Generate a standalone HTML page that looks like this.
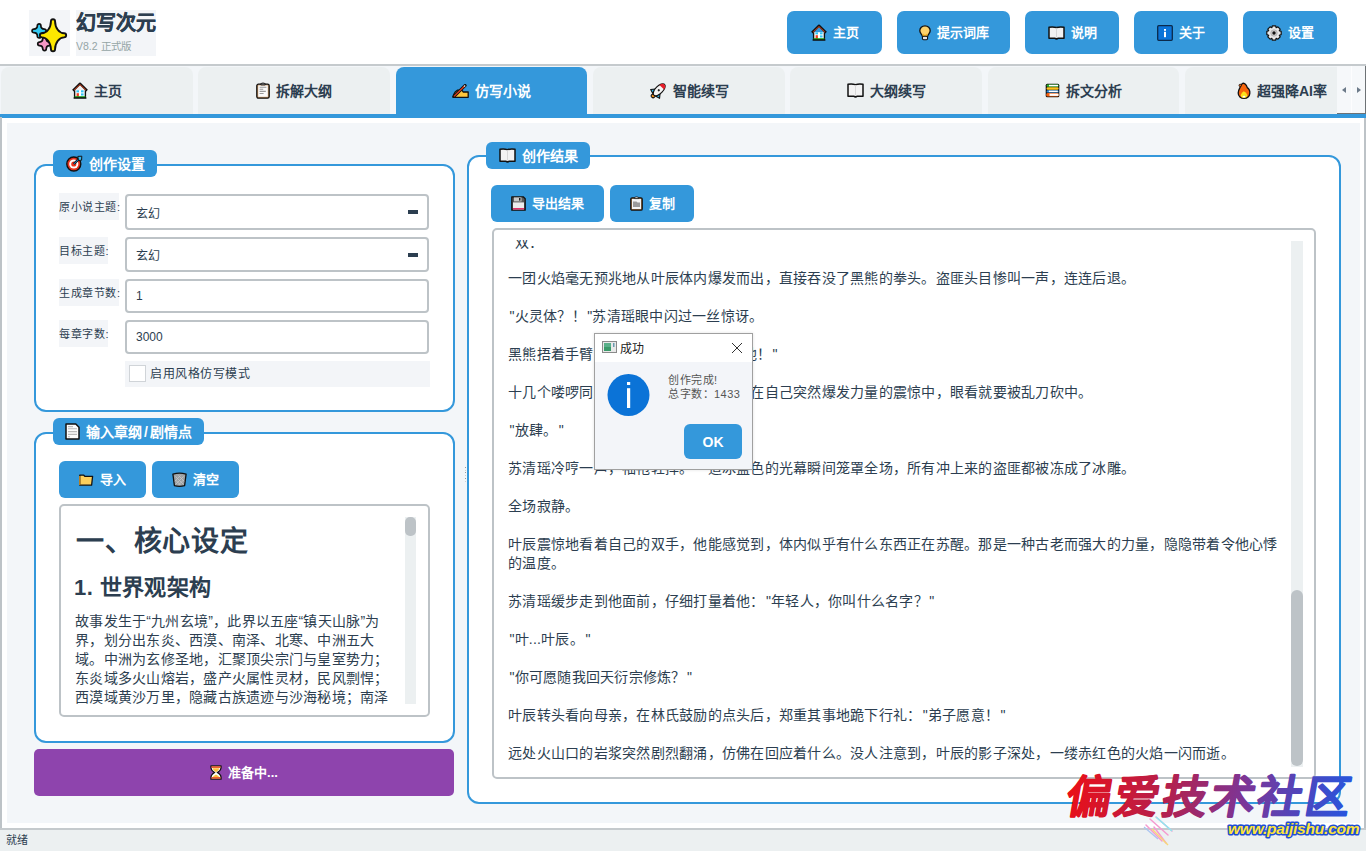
<!DOCTYPE html>
<html lang="zh-CN"><head><meta charset="utf-8">
<style>
*{margin:0;padding:0;box-sizing:border-box}
html,body{width:1366px;height:851px;overflow:hidden;background:#fff;text-spacing-trim:space-all;font-family:"Liberation Sans",sans-serif;color:#2c3e50}
.a{position:absolute}
svg{display:block;flex:none}
.hbtn{position:absolute;top:11px;height:43px;background:#3498db;border-radius:7px;color:#fff;font-weight:bold;font-size:13px;line-height:16px;display:flex;align-items:center;justify-content:center;gap:6px}
.tab{position:absolute;top:67px;height:47px;background:#ecf0f1;border-radius:8px 8px 0 0;font-weight:bold;font-size:14px;line-height:18px;display:flex;align-items:center;justify-content:center;gap:6px;color:#2c3e50}
.tab.on{background:#3498db;color:#fff}
.grp{position:absolute;border:2px solid #3498db;border-radius:12px;background:#fff}
.badge{position:absolute;background:#3498db;border-radius:6px;color:#fff;font-weight:bold;font-size:14px;line-height:18px;display:flex;align-items:center;justify-content:center;gap:6px}
.btn{position:absolute;background:#3498db;border-radius:6px;color:#fff;font-weight:bold;font-size:13px;line-height:16px;display:flex;align-items:center;justify-content:center;gap:6px}
.lbl{position:absolute;left:59px;height:27px;background:#f3f5f8;font-size:11px;letter-spacing:0.6px;line-height:29px;color:#2c3e50;white-space:nowrap}
.inp{position:absolute;left:125px;width:304px;border:2px solid #bdc3c7;border-radius:4px;background:#fff;font-size:12px;padding-left:9px;display:flex;align-items:center}
.dd{position:absolute;right:9px;top:50%;width:10px;height:4px;margin-top:-2px;background:#2c3e50}
.rl{position:absolute;left:14px;height:19px;line-height:19px;font-size:14px;letter-spacing:0.25px;white-space:nowrap;color:#2c3e50}
.ll{position:absolute;left:14px;height:19px;line-height:19px;font-size:14px;letter-spacing:0.25px;white-space:nowrap;color:#2c3e50}
.tab span,.hbtn span,.badge span,.btn span,.bb{-webkit-text-stroke:0}
.q{display:inline-block;width:6.5px;padding-left:1.5px;letter-spacing:0}
</style></head><body>
<!-- header -->
<div class="a" style="left:29px;top:10px;width:41px;height:46px;background:#f3f5f8"></div>
<div class="a" style="left:28px;top:12px;width:44px;height:44px">
<svg width="44" height="44" viewBox="0 0 44 44"><path d="M12.00 13.60C12.00 16.52 13.48 18.00 16.40 18.00A0.9 0.9 0 0 1 16.40 19.80C13.48 19.80 12.00 21.28 12.00 24.20A0.9 0.9 0 0 1 10.20 24.20C10.20 21.28 8.71 19.80 5.80 19.80A0.9 0.9 0 0 1 5.80 18.00C8.71 18.00 10.20 16.52 10.20 13.60A0.9 0.9 0 0 1 12.00 13.60Z" fill="#33c9f2" stroke="#111" stroke-width="3.4" stroke-linejoin="round" paint-order="stroke"/><path d="M17.40 26.80C17.40 29.55 18.75 30.90 21.50 30.90A0.9 0.9 0 0 1 21.50 32.70C18.75 32.70 17.40 34.05 17.40 36.80A0.9 0.9 0 0 1 15.60 36.80C15.60 34.05 14.25 32.70 11.50 32.70A0.9 0.9 0 0 1 11.50 30.90C14.25 30.90 15.60 29.55 15.60 26.80A0.9 0.9 0 0 1 17.40 26.80Z" fill="#f598c4" stroke="#111" stroke-width="3.4" stroke-linejoin="round" paint-order="stroke"/><path d="M26.10 9.30C26.10 16.30 30.55 22.20 36.10 22.20A1.1 1.1 0 0 1 36.10 24.40C30.55 24.40 26.10 30.30 26.10 37.30A1.1 1.1 0 0 1 23.90 37.30C23.90 30.30 19.45 24.40 13.90 24.40A1.1 1.1 0 0 1 13.90 22.20C19.45 22.20 23.90 16.30 23.90 9.30A1.1 1.1 0 0 1 26.10 9.30Z" fill="#fde800" stroke="#111" stroke-width="3.8" stroke-linejoin="round" paint-order="stroke"/></svg></div>
<div class="a" style="left:76px;top:10px;width:80px;height:46px;background:#f3f5f8"></div>
<div class="a" style="left:76px;top:9px;font-size:20px;font-weight:bold;color:#2c3e50;line-height:28px;white-space:nowrap;-webkit-text-stroke:0.4px #2c3e50">幻写次元</div>
<div class="a" style="left:76px;top:38px;font-size:10.5px;color:#95a5a6;line-height:16px;white-space:nowrap">V8.2 正式版</div>

<div class="hbtn" style="left:787px;width:95px"><svg width="16" height="17" viewBox="0 0 16 17"><path d="M2.6 8.2V15.6H13.4V8.2" fill="#fff" stroke="#111" stroke-width="1.4"/><path d="M0.9 8.6L8 1.6 15.1 8.6" fill="none" stroke="#111" stroke-width="2.2" stroke-linejoin="round"/><path d="M2.2 8.1L8 2.6 13.8 8.1" fill="none" stroke="#e84a1e" stroke-width="1"/><rect x="4.4" y="8.3" width="2.6" height="2.1" fill="#32c5f4"/><rect x="9" y="8.3" width="2.6" height="2.1" fill="#32c5f4"/><rect x="9" y="11.4" width="2.6" height="2.1" fill="#32c5f4"/><rect x="4.6" y="11.2" width="2.3" height="3.8" fill="#f0401e"/><rect x="2.6" y="14.2" width="10.8" height="1.4" fill="#18a018"/><rect x="1.6" y="15.4" width="12.8" height="1.3" fill="#111"/></svg><span>主页</span></div>
<div class="hbtn" style="left:897px;width:113px"><svg width="12" height="16" viewBox="0 0 12 16"><path d="M6 0.8C2.9 0.8 0.8 3 0.8 5.8 0.8 8.2 3 9.5 3.4 11.3H8.6C9 9.5 11.2 8.2 11.2 5.8 11.2 3 9.1 0.8 6 0.8Z" fill="#fdd36c" stroke="#111" stroke-width="1.3"/><path d="M4 8.5L6 10 8 8.5 8.4 11.3H3.6Z" fill="#fcb61a"/><rect x="3.4" y="11.3" width="5.2" height="3.4" rx="1.2" fill="#e4e4e4" stroke="#111" stroke-width="1.1"/></svg><span>提示词库</span></div>
<div class="hbtn" style="left:1025px;width:94px"><svg width="17" height="14" viewBox="0 0 17 14"><path d="M1 1.3Q4.6 0.5 8.5 1.5 12.4 0.5 16 1.3V12.2H10.2Q8.5 13.6 6.8 12.2H1Z" fill="#f2f2f2" stroke="#111" stroke-width="1.5" stroke-linejoin="round"/><path d="M8.5 1.9V11.8" stroke="#cfcfcf" stroke-width="0.8"/></svg><span>说明</span></div>
<div class="hbtn" style="left:1134px;width:94px"><svg width="16" height="16" viewBox="0 0 16 16"><rect x="0.7" y="0.7" width="14.6" height="14.6" rx="1" fill="#0b74d8" stroke="#0c2a4a" stroke-width="1.3"/><rect x="7" y="4" width="2" height="1.8" fill="#fff"/><rect x="7" y="6.8" width="2" height="5.4" fill="#fff"/></svg><span>关于</span></div>
<div class="hbtn" style="left:1243px;width:94px"><svg width="16" height="16" viewBox="0 0 16 16"><g transform="translate(8 8)"><path d="M-1.6 -7.2H1.6L2.2 -5.3 3.9 -6.2 6.2 -3.9 5.3 -2.2 7.2 -1.6V1.6L5.3 2.2 6.2 3.9 3.9 6.2 2.2 5.3 1.6 7.2H-1.6L-2.2 5.3 -3.9 6.2 -6.2 3.9 -5.3 2.2 -7.2 1.6V-1.6L-5.3 -2.2 -6.2 -3.9 -3.9 -6.2 -2.2 -5.3Z" fill="#e8e8e8" stroke="#111" stroke-width="1.2" stroke-linejoin="round"/><circle r="3.2" fill="#cfcfcf" stroke="#aaa" stroke-width="0.8"/><circle r="1.7" fill="#111"/></g></svg><span>设置</span></div>

<div class="a" style="left:0;top:64px;width:1366px;height:2px;background:#c5cacd"></div>
<div class="a" style="left:0;top:66px;width:1366px;height:48px;background:#f3f6f9"></div>
<div class="tab" style="left:1px;width:192px"><svg width="16" height="17" viewBox="0 0 16 17"><path d="M2.6 8.2V15.6H13.4V8.2" fill="#fff" stroke="#111" stroke-width="1.4"/><path d="M0.9 8.6L8 1.6 15.1 8.6" fill="none" stroke="#111" stroke-width="2.2" stroke-linejoin="round"/><path d="M2.2 8.1L8 2.6 13.8 8.1" fill="none" stroke="#e84a1e" stroke-width="1"/><rect x="4.4" y="8.3" width="2.6" height="2.1" fill="#32c5f4"/><rect x="9" y="8.3" width="2.6" height="2.1" fill="#32c5f4"/><rect x="9" y="11.4" width="2.6" height="2.1" fill="#32c5f4"/><rect x="4.6" y="11.2" width="2.3" height="3.8" fill="#f0401e"/><rect x="2.6" y="14.2" width="10.8" height="1.4" fill="#18a018"/><rect x="1.6" y="15.4" width="12.8" height="1.3" fill="#111"/></svg><span>主页</span></div>
<div class="tab" style="left:198px;width:192px"><svg width="14" height="17" viewBox="0 0 14 17"><rect x="0.8" y="2.2" width="12.4" height="14" rx="1.6" fill="#c99866" stroke="#111" stroke-width="1.3"/><rect x="2.2" y="3.4" width="9.6" height="11.4" fill="#fbfbfb"/><path d="M3.6 5.2h6.8M3.6 7.3h3.6M3.6 9.4h6.2M3.6 11.5h4" stroke="#9a9a9a" stroke-width="1.1"/><path d="M4.8 3V1.6Q7 0.2 9.2 1.6V3Z" fill="#777" stroke="#111" stroke-width="0.8"/></svg><span>拆解大纲</span></div>
<div class="tab on" style="left:396px;width:191px"><svg width="17" height="14" viewBox="0 0 17 14"><path d="M1 13.3L1.6 10.8Q2.8 7.6 5.6 6.2H9Q10.6 6.4 11.2 8H16.2V13.3Z" fill="#fcc63e" stroke="#111" stroke-width="1.3" stroke-linejoin="round"/><path d="M1.8 12.6L13.2 1.4" stroke="#111" stroke-width="2.9" stroke-linecap="round"/><path d="M2 12.4L12.4 2.2" stroke="#ea3d1a" stroke-width="1.3"/><path d="M12 2.6L13.1 1.5" stroke="#e8e8e8" stroke-width="1.3"/></svg><span>仿写小说</span></div>
<div class="tab" style="left:593px;width:192px"><svg width="17" height="17" viewBox="0 0 17 17"><g transform="translate(9.2 7.8) rotate(-45)"><path d="M-2 -3.2L-5.8 -6.3 -7 -2.2Z" fill="#2ab6ea" stroke="#111" stroke-width="1.1" stroke-linejoin="round"/><path d="M-2 3.2L-5.8 6.3 -7 2.2Z" fill="#2ab6ea" stroke="#111" stroke-width="1.1" stroke-linejoin="round"/><circle cx="-8.6" cy="0" r="1.9" fill="#f7941d" stroke="#111" stroke-width="1"/><ellipse cx="0" cy="0" rx="7.6" ry="3.7" fill="#f4f4f4" stroke="#111" stroke-width="1.2"/><path d="M3.6 -3.3Q7.4 -2.4 7.4 0Q7.4 2.4 3.6 3.3Z" fill="#e61e2a"/><circle cx="-0.6" cy="0" r="1.1" fill="#222"/></g></svg><span>智能续写</span></div>
<div class="tab" style="left:790px;width:192px"><svg width="17" height="15" viewBox="0 0 17 15"><path d="M1 1.3Q4.6 0.4 8.5 1.6 12.4 0.4 16 1.3V13.2H10.2Q8.5 14.6 6.8 13.2H1Z" fill="#f3f3f3" stroke="#111" stroke-width="1.5" stroke-linejoin="round"/><path d="M8.5 2V12.8" stroke="#d0d0d0" stroke-width="0.8"/></svg><span>大纲续写</span></div>
<div class="tab" style="left:988px;width:191px"><svg width="15" height="15" viewBox="0 0 15 15"><rect x="0.7" y="0.7" width="13.6" height="13.6" rx="1.5" fill="#111"/><rect x="1.6" y="1.4" width="12" height="2.4" rx="1.2" fill="#2dbb2d"/><rect x="4" y="1.8" width="9" height="1.5" fill="#fff"/><rect x="1.6" y="4.3" width="12" height="2.4" rx="1.2" fill="#fcc21b"/><rect x="1.6" y="7.2" width="12" height="2.4" rx="1.2" fill="#2e8bdc"/><rect x="3.8" y="7.6" width="9" height="1.5" fill="#fff"/><rect x="1.2" y="10.1" width="12.5" height="3.3" rx="1.5" fill="#f5600f"/><rect x="4.5" y="10.6" width="9" height="2.3" fill="#fff"/></svg><span>拆文分析</span></div>
<div class="tab" style="left:1185px;width:152px;border-radius:8px 0 0 0;justify-content:flex-end;padding-right:10px"><svg width="14" height="17" viewBox="0 0 14 17"><path d="M6.2 1.2C8.6 1.6 9.6 3.4 10.3 5.6C12.4 7 13 9.4 12.8 11.4C12.5 14.4 10.2 16.3 7 16.3C3.8 16.3 1.2 14.3 1.2 11C1.2 8.2 2.6 6.6 3.4 4.8C4 3 5 1.4 6.2 1.2Z" fill="#f7650c" stroke="#111" stroke-width="1.3" stroke-linejoin="round"/><circle cx="3.2" cy="3.4" r="1.2" fill="#f7650c" stroke="#111" stroke-width="0.8"/><path d="M6.8 9.2C9 10.4 10.6 12.2 10.3 13.9C10 15.3 8.6 15.7 7 15.7C5.4 15.7 4 15.3 3.8 13.9C3.6 12.2 5 10.4 6.8 9.2Z" fill="#fde21a"/><path d="M7 13.4C8 13.9 8.6 14.6 8.5 15.1 8.2 15.5 7.6 15.6 7 15.6 6.4 15.6 5.8 15.5 5.5 15.1 5.4 14.6 6 13.9 7 13.4Z" fill="#fff"/></svg><span>超强降AI率</span></div>
<div class="a" style="left:1337px;top:66px;width:29px;height:47px;background:#f6f8fa"></div><div class="a" style="left:1365px;top:66px;width:1px;height:48px;background:#6d7275"></div>
<div class="a" style="left:1351px;top:66px;width:1px;height:47px;background:#fdfdfe"></div>
<div class="a" style="left:1337px;top:113px;width:29px;height:1px;background:#6d7275"></div>
<div class="a" style="left:1342px;top:87px;width:0;height:0;border-top:3.5px solid transparent;border-bottom:3.5px solid transparent;border-right:4px solid #6c7a89"></div>
<div class="a" style="left:1356.5px;top:87px;width:0;height:0;border-top:3.5px solid transparent;border-bottom:3.5px solid transparent;border-left:4px solid #6c7a89"></div>

<!-- pane -->
<div class="a" style="left:0;top:114px;width:1366px;height:3.6px;background:#3498db"></div>
<div class="a" style="left:0;top:117px;width:2px;height:711px;background:#bdc3c7"></div>
<div class="a" style="left:1364px;top:118px;width:2px;height:710px;background:#bdc3c7"></div>
<div class="a" style="left:7px;top:123px;width:1353px;height:700px;background:#f3f6f9"></div>
<div class="a" style="left:0;top:828px;width:1366px;height:2px;background:#c5cacd"></div>
<div class="a" style="left:0;top:830px;width:1366px;height:21px;background:#ecf0f1"></div>
<div class="a" style="left:6px;top:832px;font-size:11px;line-height:16px;color:#2c3e50">就绪</div>

<!-- group 1 -->
<div class="grp" style="left:34px;top:164px;width:421px;height:248px"></div>
<div class="badge" style="left:53px;top:150px;width:104px;height:27px"><svg width="17" height="17" viewBox="0 0 17 17"><circle cx="7.8" cy="9" r="7" fill="#e8321e" stroke="#111" stroke-width="1.4"/><circle cx="7.8" cy="9" r="4.6" fill="#fff"/><circle cx="7.8" cy="9" r="2.6" fill="#e8321e"/><path d="M7.8 9L14 2.8" stroke="#111" stroke-width="2.4"/><path d="M7.8 9L13.6 3.2" stroke="#1a8ad4" stroke-width="1"/><path d="M11.8 1.4L15.8 1.2 15.6 5.2 12.5 5.5Z" fill="#35b8f0" stroke="#111" stroke-width="1"/></svg><span>创作设置</span></div>
<div class="lbl" style="top:193px;width:60px">原小说主题:</div>
<div class="inp" style="top:194px;height:36px">玄幻<span class="dd"></span></div>
<div class="lbl" style="top:237px;width:49px">目标主题:</div>
<div class="inp" style="top:237px;height:35px">玄幻<span class="dd"></span></div>
<div class="lbl" style="top:279px;width:60px">生成章节数:</div>
<div class="inp" style="top:279px;height:34px">1</div>
<div class="lbl" style="top:320px;width:49px">每章字数:</div>
<div class="inp" style="top:320px;height:34px">3000</div>
<div class="a" style="left:125px;top:361px;width:305px;height:26px;background:#f3f5f8"></div>
<div class="a" style="left:129px;top:365px;width:17px;height:17px;border:1px solid #d0d4d8;background:#fff"></div>
<div class="a" style="left:150px;top:365px;font-size:12px;letter-spacing:0.5px;line-height:18px;white-space:nowrap">启用风格仿写模式</div>

<!-- group 2 -->
<div class="grp" style="left:34px;top:432px;width:421px;height:311px"></div>
<div class="badge" style="left:53px;top:418px;width:151px;height:27px"><svg width="15" height="17" viewBox="0 0 15 17"><path d="M1 1H10.8L14 4.2V16H1Z" fill="#fcfcfc" stroke="#111" stroke-width="1.5" stroke-linejoin="round"/><path d="M3 3.6h5M3 5.8h9M3 8.6h9M3 11.4h9M3 13.8h2" stroke="#bbb" stroke-width="1.1"/></svg><span>输入章纲<i style="font-style:normal;margin:0 2.5px">/</i>剧情点</span></div>
<div class="btn" style="left:59px;top:461px;width:87px;height:37px"><svg width="15" height="12" viewBox="0 0 15 12"><path d="M0.8 1.2H4.8L5.8 2.3H13.6L12.6 11.2H0.8Z" fill="#fccf5c" stroke="#111" stroke-width="1.3" stroke-linejoin="round"/><path d="M0.8 11V2" stroke="#f5a623" stroke-width="1"/></svg><span>导入</span></div>
<div class="btn" style="left:152px;top:461px;width:87px;height:37px"><svg width="15" height="15" viewBox="0 0 15 15"><path d="M0.9 2.2Q7.5 0 14.1 2.2L12.6 13.6Q7.5 15 2.4 13.6Z" fill="#9ea2a5" stroke="#111" stroke-width="1.3" stroke-linejoin="round"/><path d="M3.5 4.5L11.5 12.5M6.5 3.5L12.2 9.2M3.5 8L8.5 13M11.5 4.5L3.5 12.5M8.5 3.5L2.8 9.2M11.5 8L6.5 13" stroke="#c4c7c9" stroke-width="0.8"/></svg><span>清空</span></div>
<div class="a" style="left:59px;top:504px;width:371px;height:213px;border:2px solid #bdc3c7;border-radius:5px;background:#fff"></div>
<div class="a" style="left:61px;top:506px;width:344px;height:200px;overflow:hidden">
<div class="a bb" style="left:15px;top:19px;font-size:28px;line-height:34px;font-weight:bold;white-space:nowrap;letter-spacing:0.8px">一、核心设定</div>
<div class="a bb" style="left:13px;top:68px;font-size:22px;line-height:28px;font-weight:bold;white-space:nowrap;letter-spacing:0.4px">1. 世界观架构</div>
<div class="ll" style="top:106px">故事发生于“九州玄境”，此界以五座“镇天山脉”为</div>
<div class="ll" style="top:125px">界，划分出东炎、西漠、南泽、北寒、中洲五大</div>
<div class="ll" style="top:144px">域。中洲为玄修圣地，汇聚顶尖宗门与皇室势力；</div>
<div class="ll" style="top:163px">东炎域多火山熔岩，盛产火属性灵材，民风剽悍；</div>
<div class="ll" style="top:182px">西漠域黄沙万里，隐藏古族遗迹与沙海秘境；南泽</div>
</div>
<div class="a" style="left:405px;top:517px;width:11px;height:187px;background:#ecf0f1"></div>
<div class="a" style="left:405px;top:517px;width:11px;height:19px;background:#bdc3c7;border-radius:5px"></div>
<div class="a" style="left:34px;top:749px;width:420px;height:47px;background:#8e44ad;border-radius:5px;color:#fff;font-weight:bold;font-size:13px;line-height:16px;display:flex;align-items:center;justify-content:center;gap:6px"><svg width="12" height="15" viewBox="0 0 12 15"><path d="M1 0.8H11V2.6Q11 5.6 7.3 7.5 11 9.4 11 12.4V14.2H1V12.4Q1 9.4 4.7 7.5 1 5.6 1 2.6Z" fill="#fff" stroke="#111" stroke-width="1.3" stroke-linejoin="round"/><rect x="1.5" y="1.3" width="9" height="1.6" fill="#e8501e"/><rect x="1.5" y="12.1" width="9" height="1.6" fill="#e8501e"/><path d="M2.6 3.2H9.4Q9 5.6 6 7.3 3 5.6 2.6 3.2Z" fill="#fcbf3c"/><path d="M6 7.5V12H2.8Q3.6 10.5 6 9.5 8.4 10.5 9.2 12H6" fill="#fcbf3c"/></svg><span>准备中...</span></div>

<div class="a" style="left:465px;top:467px;width:1px;height:1px;background:#9a9a9a"></div><div class="a" style="left:465px;top:470px;width:1px;height:1px;background:#cfcfcf"></div><div class="a" style="left:465px;top:472px;width:1px;height:1px;background:#9a9a9a"></div><div class="a" style="left:465px;top:475px;width:1px;height:1px;background:#cfcfcf"></div><div class="a" style="left:465px;top:478px;width:1px;height:1px;background:#9a9a9a"></div><div class="a" style="left:465px;top:481px;width:1px;height:1px;background:#cfcfcf"></div>
<!-- group 3 -->
<div class="grp" style="left:467px;top:155px;width:874px;height:649px"></div>
<div class="badge" style="left:486px;top:142px;width:104px;height:27px"><svg width="17" height="15" viewBox="0 0 17 15"><path d="M1 1.3Q4.6 0.4 8.5 1.6 12.4 0.4 16 1.3V13.2H10.2Q8.5 14.6 6.8 13.2H1Z" fill="#f3f3f3" stroke="#111" stroke-width="1.5" stroke-linejoin="round"/><path d="M8.5 2V12.8" stroke="#d0d0d0" stroke-width="0.8"/></svg><span>创作结果</span></div>
<div class="btn" style="left:491px;top:185px;width:113px;height:37px"><svg width="15" height="15" viewBox="0 0 15 15"><path d="M0.8 0.8H12.2L14.2 2.8V14.2H0.8Z" fill="#5a5a5a" stroke="#111" stroke-width="1.3" stroke-linejoin="round"/><rect x="3" y="1.4" width="7.5" height="4" fill="#c9c9c9"/><rect x="8" y="2" width="1.5" height="2.6" fill="#222"/><rect x="2" y="6.4" width="11" height="7" fill="#ededed"/><rect x="2" y="12" width="11" height="1.5" fill="#e2336b"/></svg><span>导出结果</span></div>
<div class="btn" style="left:610px;top:185px;width:84px;height:37px"><svg width="13" height="15" viewBox="0 0 13 15"><rect x="0.8" y="1.8" width="11.4" height="12.4" rx="1.3" fill="#b8844e" stroke="#111" stroke-width="1.3"/><rect x="2" y="3" width="9" height="10" fill="#f4f4f4"/><path d="M3 5.5H6.5L7.5 6.5H10V11H3Z" fill="#9a9a9a"/><path d="M4.5 2.6V1.4Q6.5 0 8.5 1.4V2.6Z" fill="#ccc" stroke="#111" stroke-width="0.7"/></svg><span>复制</span></div>
<div class="a" style="left:492px;top:228px;width:824px;height:551px;border:2px solid #bdc3c7;border-radius:5px;background:#fff"></div>
<div class="a" style="left:494px;top:240px;width:795px;height:527px;overflow:hidden">
<div class="rl" style="top:-7.3px;left:20.5px">双：</div>
<div class="rl" style="top:29.2px">一团火焰毫无预兆地从叶辰体内爆发而出，直接吞没了黑熊的拳头。盗匪头目惨叫一声，连连后退。</div>
<div class="rl" style="top:67.2px"><span class="q">"</span>火灵体？！<span class="q">"</span>苏清瑶眼中闪过一丝惊讶。</div>
<div class="rl" style="top:105.2px">黑熊捂着手臂，厉声喝道：<span class="q">"</span>给我杀了他！<span class="q">"</span></div>
<div class="rl" style="top:143.2px">十几个喽啰同时扑了上来，叶辰还沉浸在自己突然爆发力量的震惊中，眼看就要被乱刀砍中。</div>
<div class="rl" style="top:181.2px"><span class="q">"</span>放肆。<span class="q">"</span></div>
<div class="rl" style="top:219.2px">苏清瑶冷哼一声，袖袍轻挥。一道冰蓝色的光幕瞬间笼罩全场，所有冲上来的盗匪都被冻成了冰雕。</div>
<div class="rl" style="top:257.2px">全场寂静。</div>
<div class="rl" style="top:295.2px">叶辰震惊地看着自己的双手，他能感觉到，体内似乎有什么东西正在苏醒。那是一种古老而强大的力量，隐隐带着令他心悸</div>
<div class="rl" style="top:313.5px">的温度。</div>
<div class="rl" style="top:351.5px">苏清瑶缓步走到他面前，仔细打量着他：<span class="q">"</span>年轻人，你叫什么名字？<span class="q">"</span></div>
<div class="rl" style="top:389.5px"><span class="q">"</span>叶...叶辰。<span class="q">"</span></div>
<div class="rl" style="top:427.5px"><span class="q">"</span>你可愿随我回天衍宗修炼？<span class="q">"</span></div>
<div class="rl" style="top:465.5px">叶辰转头看向母亲，在林氏鼓励的点头后，郑重其事地跪下行礼：<span class="q">"</span>弟子愿意！<span class="q">"</span></div>
<div class="rl" style="top:503.5px">远处火山口的岩浆突然剧烈翻涌，仿佛在回应着什么。没人注意到，叶辰的影子深处，一缕赤红色的火焰一闪而逝。</div>

</div>
<div class="a" style="left:1291px;top:241px;width:12px;height:526px;background:#ecf0f1"></div>
<div class="a" style="left:1291px;top:590px;width:12px;height:176px;background:#bdc3c7;border-radius:6px"></div>

<!-- dialog -->
<div class="a" style="left:594px;top:333px;width:159px;height:137px;border:1px solid #a0a0a0;background:#f3f5f9;box-shadow:0 0 3px rgba(0,0,0,.12)"></div>
<div class="a" style="left:595px;top:334px;width:157px;height:28px;background:#fff"></div>
<div class="a" style="left:602px;top:341px;width:15px;height:12px">
<svg width="15" height="12" viewBox="0 0 15 12"><rect x="0.5" y="0.5" width="14" height="11" fill="#e8e8e8" stroke="#8a8a8a"/><rect x="2" y="2" width="7" height="8" fill="#3a9a6a"/><rect x="2" y="2" width="7" height="4" fill="#5ab08a"/><rect x="11" y="2" width="1.5" height="4" fill="#6a9ab0"/></svg></div>
<div class="a" style="left:620px;top:340.5px;font-size:12px;line-height:16px;color:#222;white-space:nowrap">成功</div>
<div class="a" style="left:731px;top:342px;width:12px;height:12px">
<svg width="12" height="12" viewBox="0 0 12 12"><path d="M1 1L11 11M11 1L1 11" stroke="#333" stroke-width="1"/></svg></div>
<div class="a" style="left:607px;top:374px;width:43px;height:43px">
<svg width="43" height="43" viewBox="0 0 43 43"><circle cx="21.5" cy="21" r="21" fill="#0b73d7"/><rect x="20" y="8" width="3.2" height="3" fill="#fff"/><rect x="20" y="14.2" width="3.2" height="19.8" fill="#fff"/></svg></div>
<div class="a" style="left:668px;top:373px;font-size:11px;letter-spacing:0.5px;line-height:14.2px;color:#555;white-space:nowrap">创作完成!<br>总字数：1433</div>
<div class="a" style="left:684px;top:424px;width:58px;height:35px;background:#3498db;border-radius:6px;color:#fff;font-weight:bold;font-size:14px;display:flex;align-items:center;justify-content:center">OK</div>

<!-- watermark -->
<svg class="a" style="left:1040px;top:755px" width="326" height="96" viewBox="0 0 326 96">
<defs><linearGradient id="wg" x1="0" y1="0" x2="1" y2="0"><stop offset="0" stop-color="#ea0f18"/><stop offset="0.35" stop-color="#b3204e"/><stop offset="0.62" stop-color="#7b3698"/><stop offset="1" stop-color="#2456e0"/></linearGradient></defs>
<g transform="translate(24 58) skewX(-10)"><text x="0" y="0" font-family="Liberation Sans, sans-serif" font-size="45" font-weight="bold" fill="url(#wg)" stroke="url(#wg)" stroke-width="1.2" stroke-linejoin="round" letter-spacing="3.2">偏爱技术社区</text></g>
<path d="M110 64L128 80M116 62L132 76M106 70L122 86M114 72L126 88" stroke-width="1.5" stroke-linecap="round" fill="none" stroke="#f59ad0"/>
<path d="M116 62L132 76" stroke="#8ee8f0" stroke-width="1.6"/><path d="M112 74L128 90" stroke="#f7d878" stroke-width="1.4"/><path d="M104 72L118 84" stroke="#a9c4f0" stroke-width="1.2"/>
<g transform="translate(188 79)"><text x="0" y="0" font-family="Liberation Sans, sans-serif" font-size="15.5" font-weight="bold" font-style="italic" fill="#ffe53a" stroke="#1f4fd6" stroke-width="3" stroke-linejoin="round" paint-order="stroke" letter-spacing="-0.2">www.paijishu.com</text></g>
</svg>
</body></html>
